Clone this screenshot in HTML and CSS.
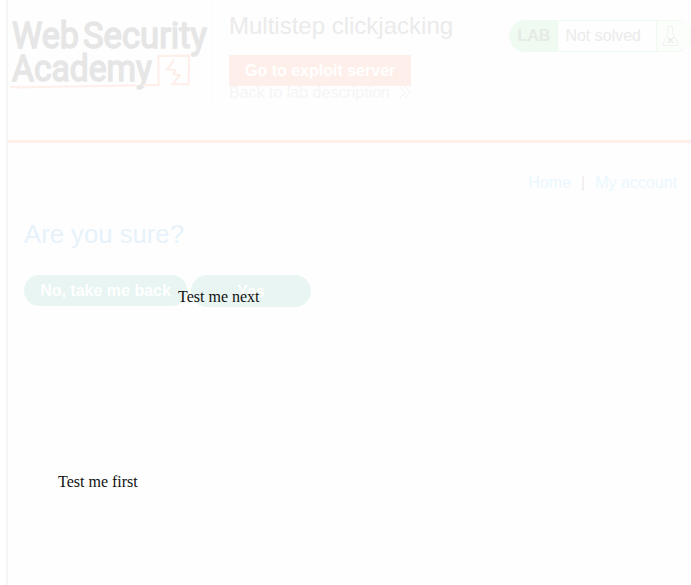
FILE: index.html
```html
<!DOCTYPE html>
<html lang="en">
<head>
<meta charset="utf-8">
<title>Multistep clickjacking</title>
<link rel="stylesheet" href="styles.css">
</head>
<body>
<div class="frame">
  <header class="header">
    <svg class="logo" width="204" height="104" viewBox="8 0 204 104" role="img" aria-label="Web Security Academy">
      <g class="logo-text">
        <text x="12" y="48" textLength="67" lengthAdjust="spacingAndGlyphs">Web</text>
        <text x="83" y="48" textLength="124" lengthAdjust="spacingAndGlyphs">Security</text>
        <text x="12" y="80.5" textLength="140" lengthAdjust="spacingAndGlyphs">Academy</text>
      </g>
      <g class="logo-mark">
        <path d="M10 86.5 L16 87.3 L70 86.5 L136 85.3 M143 85.2 H158.5 L158.3 56 L189 55.7 L188.6 84.4 L172.5 84.2 L180 75.4 L174 74 L175.3 70 L167 69.5 L173 62 V59.5"/>
      </g>
    </svg>
    <div class="intro">
      <h2 class="title">Multistep clickjacking</h2>
      <a class="exploit">Go to exploit server</a>
      <a class="back"><span>Back to lab description</span><svg width="12" height="14" viewBox="0 0 12 14"><path d="M1 1 L6 6.5 L1 12 M6 1 L11 6.5 L6 12"/></svg></a>
    </div>
    <div class="status">
      <span class="lab">LAB</span>
      <span class="state">Not solved</span>
      <span class="flask"><svg width="18" height="22" viewBox="0 0 18 22"><path d="M5 1.5 H11.5 M6 1.5 V8 L1 18.5 V20.5 H16 V18.5 L10.5 8 V1.5"/><path class="cross" d="M5.5 12.5 L11.5 18 M11.5 12.5 L5.5 18"/></svg></span>
    </div>
  </header>
  <main class="content">
    <nav class="nav"><a>Home</a><span>|</span><a>My account</a></nav>
    <h1 class="question">Are you sure?</h1>
    <div class="actions">
      <button class="button no">No, take me back</button>
      <button class="button yes">Yes</button>
    </div>
  </main>
</div>
<div class="decoy next">Test me next</div>
<div class="decoy first">Test me first</div>
</body>
</html>
```
FILE: styles.css
```css
* { box-sizing: border-box; }
body {
  margin: 0;
  height: 585px;
  overflow: hidden;
  position: relative;
  background: #fff;
  font: 16px/18px "Liberation Sans", Arial, sans-serif;
}
.frame {
  height: 585px;
  margin-left: 6px;
  border-left: 2px solid #f5f5f5;
  background: #fefefe;
}
.header {
  display: flex;
  align-items: flex-start;
  height: 143px;
  border-bottom: 3px solid #ffefea;
}
.logo {
  flex: none;
  display: block;
  width: 205px;
  border-right: 1px solid #fbfbfb;
}
.logo-text {
  font: 400 37px Roboto, sans-serif;
  fill: #e6e6e6;
  stroke: #e6e6e6;
  stroke-width: 1.5;
}
.logo-mark { fill: none; stroke: #ffefea; stroke-width: 2.2; }
.intro {
  width: 280px;
  flex: none;
  padding: 12px 0 0 16px;
  display: flex;
  flex-direction: column;
  align-items: flex-start;
}
.title {
  margin: 0 0 15px;
  font-size: 24px;
  line-height: 28px;
  font-weight: 400;
  color: #ebebeb;
  white-space: nowrap;
}
.exploit {
  width: 182px;
  height: 31px;
  line-height: 31px;
  padding-left: 16px;
  background: #ffefea;
  color: #fff;
  font-weight: 700;
}
.back {
  display: flex;
  align-items: center;
  gap: 9px;
  margin-top: -2px;
  color: #f5f5f5;
}
.back svg { fill: none; stroke: #f2f2f2; stroke-width: 1; }
.status {
  display: flex;
  flex: none;
  width: 183px;
  height: 32px;
  margin: 20px 0 0 16px;
  border: 1px solid #effbef;
  border-radius: 16px;
  overflow: hidden;
  line-height: 30px;
  color: #ebebeb;
}
.lab {
  width: 48px;
  padding-left: 7.4px;
  background: #effaf0;
  color: #e6ebe6;
  font-weight: 700;
}
.state { width: 98px; padding-left: 7.4px; }
.flask { flex: 1; border-left: 1px solid #effbef; background: #fcfefc; padding: 4px 0 0 5px; }
.flask svg { display: block; fill: none; stroke: #f1f1f1; stroke-width: 1; }
.flask .cross { stroke: #ebebeb; stroke-width: 1.5; }
.content { padding: 31px 14px 0 16px; }
.nav {
  display: flex;
  justify-content: flex-end;
  gap: 10px;
  color: #ebf7fe;
}
.nav span { color: #efebeb; }
.question {
  margin: 27px 0 26px;
  font-size: 25.7px;
  line-height: 30px;
  font-weight: 400;
  color: #e7f2fb;
}
.actions { display: flex; gap: 4px; align-items: flex-start; }
.button {
  height: 31px;
  padding: 0;
  border: 0;
  border-radius: 16px;
  background: #e8f5f2;
  color: #fff;
  font: 700 16px/31px "Liberation Sans", Arial, sans-serif;
}
.no { width: 163px; }
.yes { width: 120px; height: 32px; }
.decoy {
  position: absolute;
  font: 16px/18px "Liberation Serif", "Times New Roman", serif;
  color: #111;
}
.next { left: 178px; top: 288px; }
.first { left: 58px; top: 473px; }
```
